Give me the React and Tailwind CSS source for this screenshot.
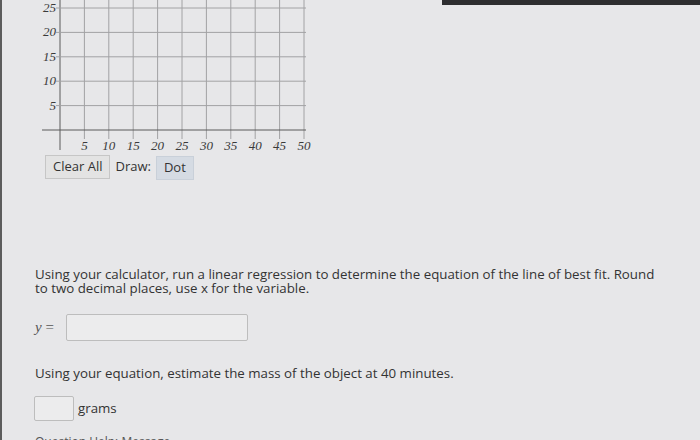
import React from 'react';

const X0 = 58;
const Y0 = 130;
const STEP = 24.4;

const Graph = () => {
  const vLines = Array.from({ length: 11 }, (_, i) => X0 + i * STEP);
  const hLines = Array.from({ length: 6 }, (_, j) => Y0 - j * STEP);
  return (
    <svg width="320" height="152" viewBox="0 0 320 152" className="block">
      {vLines.map((x, i) => (
        <line key={`v${i}`} x1={x} y1="0" x2={x} y2={i === 0 ? 150 : 139} stroke={i === 0 ? '#5a5a5a' : '#a2a2a4'} strokeWidth="1" />
      ))}
      {hLines.map((y, j) => (
        <line key={`h${j}`} x1={j === 0 ? 40 : 54} y1={y} x2="304" y2={y} stroke={j === 0 ? '#5a5a5a' : '#a2a2a4'} strokeWidth="1" />
      ))}
      {hLines.slice(1).map((y, j) => (
        <text key={`yl${j}`} x="54" y={y + 4} textAnchor="end" fontSize="13" fontStyle="italic" fill="#3a3a3a" fontFamily="'Liberation Serif', serif">
          {(j + 1) * 5}
        </text>
      ))}
      {vLines.slice(1).map((x, i) => (
        <text key={`xl${i}`} x={x} y="150" textAnchor="middle" fontSize="13" fontStyle="italic" fill="#3a3a3a" fontFamily="'Liberation Serif', serif">
          {(i + 1) * 5}
        </text>
      ))}
    </svg>
  );
};

export default function App() {
  return (
    <div className="relative w-[700px] h-[440px] overflow-hidden bg-[#e7e7e9] border-l-2 border-[#5c5c5c] text-[#333]" style={{ fontFamily: "'Open Sans', sans-serif" }}>
      <div className="absolute top-0 left-[440px] w-[260px] h-[5px] bg-[#2e2e30]" />
      <Graph />
      <div className="flex items-center gap-[5px] ml-[43px] mt-[1px] text-[13px]">
        <button className="h-[24px] px-[7px] bg-[#e3e3e3] border border-[#c6c6c6] text-[#333]">Clear All</button>
        <span>Draw:</span>
        <button className="h-[24px] px-[7px] mt-[3px] bg-[#d5dbe3] border border-[#c9d0d9] text-[#333]">Dot</button>
      </div>
      <p className="ml-[33px] mt-[88px] w-[622px] text-[13.3px] leading-[13.5px]">
        Using your calculator, run a linear regression to determine the equation of the line of best fit. Round to two decimal places, use x for the variable.
      </p>
      <div className="flex items-center ml-[33px] mt-[19px]">
        <span className="w-[31px] text-[15px] text-[#555]" style={{ fontFamily: "'Liberation Serif', serif" }}><i>y</i> =</span>
        <div className="w-[182px] h-[27px] bg-[#ececed] border border-[#bdbdbd] rounded-[2px]" />
      </div>
      <p className="ml-[33px] mt-[25px] text-[13.3px] leading-[14px]">
        Using your equation, estimate the mass of the object at 40 minutes.
      </p>
      <div className="flex items-center gap-[4px] ml-[32px] mt-[16px]">
        <div className="w-[40px] h-[25px] bg-[#ececed] border border-[#bdbdbd] rounded-[2px]" />
        <span className="text-[13.3px]">grams</span>
      </div>
      <p className="ml-[33px] mt-[14px] text-[12px] leading-[14px] text-[#555]">Question Help: Message</p>
    </div>
  );
}
